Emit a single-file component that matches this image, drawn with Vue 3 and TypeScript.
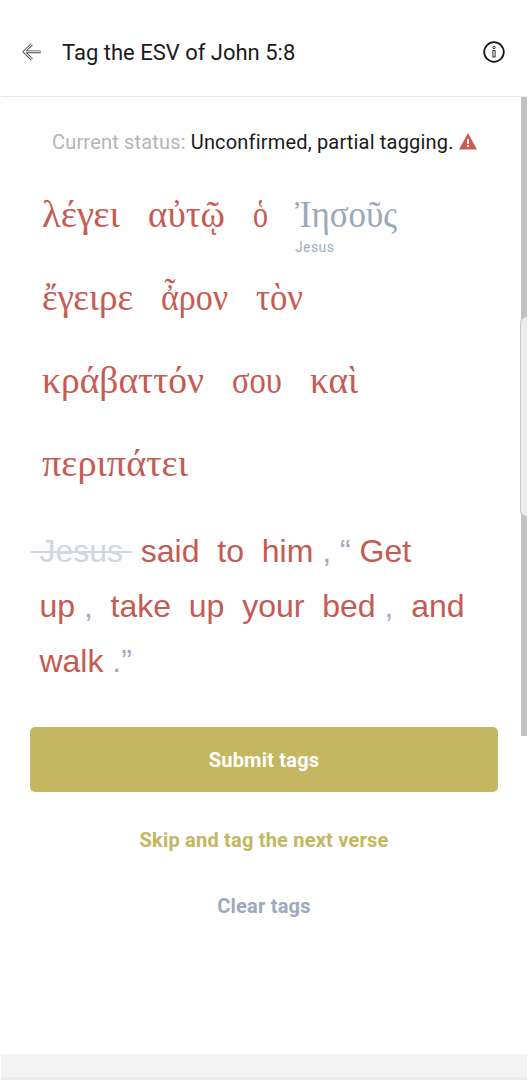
<script setup lang="ts">
interface GreekWord {
  text: string
  width: number
  gloss?: string
}
interface Token {
  text: string
  kind: 'untagged' | 'tagged' | 'mark'
}

const greek: GreekWord[][] = [
  [
    { text: 'λέγει', width: 78 },
    { text: 'αὐτῷ', width: 77 },
    { text: 'ὁ', width: 15 },
    { text: 'Ἰησοῦς', width: 102, gloss: 'Jesus' },
  ],
  [
    { text: 'ἔγειρε', width: 91 },
    { text: 'ἆρον', width: 67 },
    { text: 'τὸν', width: 47 },
  ],
  [
    { text: 'κράβαττόν', width: 162 },
    { text: 'σου', width: 50 },
    { text: 'καὶ', width: 48 },
  ],
  [{ text: 'περιπάτει', width: 146 }],
]

const english: Token[][] = [
  [
    { text: ' Jesus ', kind: 'tagged' },
    { text: ' said ', kind: 'untagged' },
    { text: ' to ', kind: 'untagged' },
    { text: ' him ', kind: 'untagged' },
    { text: ', “', kind: 'mark' },
    { text: ' Get ', kind: 'untagged' },
  ],
  [
    { text: ' up ', kind: 'untagged' },
    { text: ', ', kind: 'mark' },
    { text: ' take ', kind: 'untagged' },
    { text: ' up ', kind: 'untagged' },
    { text: ' your ', kind: 'untagged' },
    { text: ' bed ', kind: 'untagged' },
    { text: ', ', kind: 'mark' },
    { text: ' and ', kind: 'untagged' },
  ],
  [
    { text: ' walk ', kind: 'untagged' },
    { text: '.”', kind: 'mark' },
  ],
]
</script>

<template>
  <div class="screen">
    <header class="bar">
      <svg class="back" width="20" height="20" viewBox="0 0 20 20">
        <path d="M9.8 2.2 2.2 9.8l7.6 7.6M2.6 9.8h16" />
        <path class="inner" d="M9.8 2.2 2.2 9.8l7.6 7.6M2.6 9.8h15.6" />
      </svg>
      <h1>Tag the ESV of John 5:8</h1>
      <svg class="info" width="24" height="24" viewBox="0 0 24 24">
        <circle cx="12" cy="12" r="9.8" />
        <circle class="dot" cx="12" cy="7.5" r="1.2" />
        <rect class="stem" x="10.9" y="10.6" width="2.2" height="6.4" />
      </svg>
    </header>

    <main>
      <p class="status">
        <span class="label">Current status:</span>
        <span class="value">Unconfirmed, partial tagging.</span>
        <svg width="18" height="17" viewBox="0 0 18 17">
          <path d="M9 0 18 16.5H0Z" fill="#cc5c52" />
          <path d="M8 6h2v4.8H8zM8 12h2v2H8z" fill="#fff" />
        </svg>
      </p>

      <section class="greek">
        <div v-for="(line, i) in greek" :key="i" class="greek-line">
          <div v-for="word in line" :key="word.text" class="word" :class="{ done: word.gloss }">
            <svg :width="word.width" height="56">
              <text x="0" y="40" :textLength="word.width" lengthAdjust="spacingAndGlyphs">{{ word.text }}</text>
            </svg>
            <span v-if="word.gloss" class="gloss">{{ word.gloss }}</span>
          </div>
        </div>
      </section>

      <section class="english">
        <div v-for="(line, i) in english" :key="i" class="english-line"><span v-for="(token, j) in line" :key="j" :class="token.kind">{{ token.text }}</span></div>
      </section>

      <div class="actions">
        <button class="submit">Submit tags</button>
        <button class="skip">Skip and tag the next verse</button>
        <button class="clear">Clear tags</button>
      </div>
    </main>

    <footer class="nav"></footer>
    <div class="scrollbar"></div>
    <div class="handle"></div>
  </div>
</template>

<style>
body {
  margin: 0;
  background: #fefefe;
}
</style>

<style scoped>
.screen {
  position: relative;
  width: 528px;
  height: 1080px;
  overflow: hidden;
  display: flex;
  flex-direction: column;
  background: #fefefe;
  font-family: Roboto, sans-serif;
}
.bar {
  height: 96px;
  box-sizing: content-box;
  display: flex;
  align-items: center;
  margin: 0 1px;
  padding: 0 21px;
  border-bottom: 1px solid #e8e8f0;
}
.back {
  margin-top: 7px;
  fill: none;
  stroke: #444;
  stroke-width: 2.8;
}
.back .inner {
  stroke: #fefefe;
  stroke-width: 1.1;
}
h1 {
  flex: 1;
  margin: 9px 0 0 20px;
  font-size: 22px;
  line-height: 30px;
  font-weight: 400;
  color: #1a1a1a;
  white-space: nowrap;
}
.info {
  margin-top: 7px;
  fill: none;
  stroke: #1a1a1a;
  stroke-width: 1.8;
}
.info .dot,
.info .stem {
  stroke-width: 0.9;
}
main {
  flex: 1;
}
.status {
  display: flex;
  align-items: center;
  height: 30px;
  margin: 30px 0 0 52px;
  font-size: 20px;
  letter-spacing: 0.18px;
  white-space: nowrap;
}
.label {
  color: #b5b5b5;
}
.value {
  margin-left: 5px;
  color: #1a1a1a;
}
.status svg {
  margin: -1px 0 0 5px;
}
.greek {
  padding: 30px 0 0 42px;
}
.greek-line {
  display: flex;
  gap: 28px;
  height: 83px;
}
.word {
  display: flex;
  flex-direction: column;
  height: 83px;
}
.word svg {
  flex: none;
  overflow: visible;
  font-family: "Liberation Serif", serif;
  font-size: 38px;
  fill: #c65b52;
}
.word.done {
  margin-left: -1px;
}
.word.done svg {
  fill: #9ca7bc;
}
.gloss {
  margin-top: -5px;
  font-size: 14px;
  line-height: 18px;
  letter-spacing: 0.4px;
  color: #a4adc0;
}
.english {
  margin-top: 5px;
  padding-left: 30.5px;
  font: 32px "Liberation Sans", sans-serif;
}
.english-line {
  height: 55px;
  line-height: 55px;
  white-space: pre;
}
.untagged {
  color: #c45b53;
}
.mark {
  color: #a0abc0;
}
.tagged {
  color: #d0d6e2;
  text-decoration: line-through;
  text-decoration-thickness: 2px;
}
.actions {
  display: flex;
  flex-direction: column;
  padding: 0 30px;
  margin-top: 38px;
}
button {
  height: 66px;
  border: 0;
  padding: 0;
  background: none;
  font-family: Roboto, sans-serif;
  font-size: 20px;
  font-weight: 700;
  letter-spacing: 0.2px;
}
.submit {
  height: 65px;
  border-radius: 5px;
  background: #c5b662;
  color: #fff;
}
.skip {
  margin-top: 15px;
  color: #c5b662;
}
.clear {
  color: #9fa9bd;
}
.nav {
  height: 23px;
  margin: 0 1px;
  background: #f3f3f3;
  border-bottom: 3px solid #ececec;
}
.scrollbar {
  position: absolute;
  left: 521px;
  top: 97px;
  width: 6px;
  height: 639px;
  background: #c2c2c2;
}
.handle {
  position: absolute;
  left: 520px;
  top: 316px;
  width: 7px;
  height: 201px;
  box-sizing: border-box;
  border: 1px solid #c8c8c8;
  border-right: 0;
  border-radius: 7px 0 0 7px;
  background: #ececec;
}
</style>
